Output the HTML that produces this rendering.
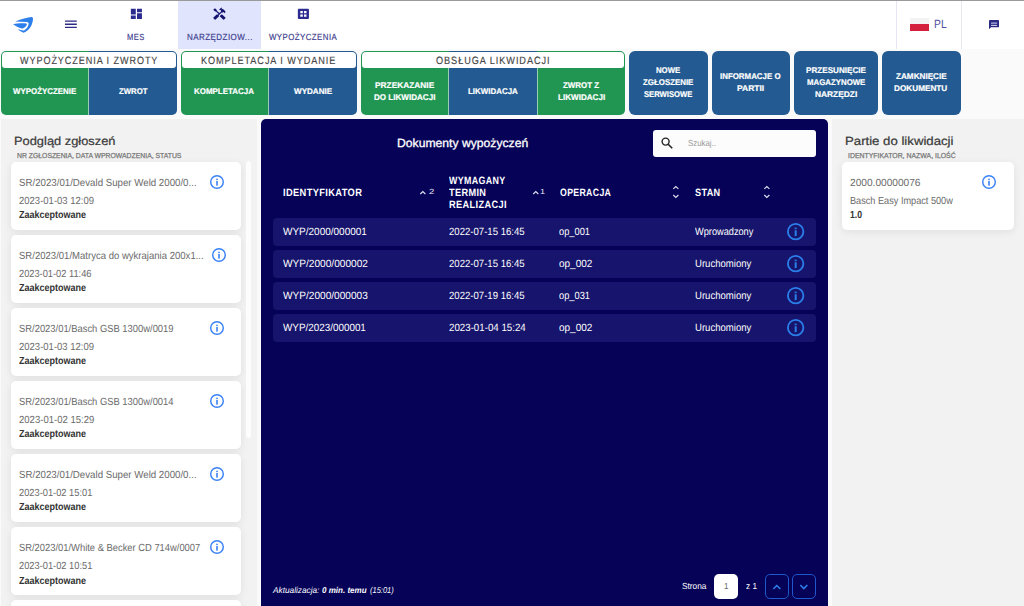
<!DOCTYPE html>
<html lang="pl">
<head>
<meta charset="utf-8">
<title>Narzędziownia – Wypożyczenia</title>
<style>
*{box-sizing:border-box;margin:0;padding:0}
html,body{width:1024px;height:606px;overflow:hidden;background:#fafafa;font-family:"Liberation Sans",sans-serif;color:#333;text-rendering:geometricPrecision}
body{position:relative}
.t{position:absolute;white-space:pre;transform-origin:0 50%;display:block}
.abs{position:absolute}
#topbar{position:absolute;left:0;top:0;width:1024px;height:49px;background:#fff;border-top:1px solid #999}
.tab{position:absolute;top:0;height:48px;width:83px;color:#3b3b8c}
.tab.active{background:#e0e4fd}
.tab svg{position:absolute;fill:#2c2c90}
.tab.active svg{fill:#14146f}
#lang{position:absolute;left:895.5px;top:0;width:66.5px;height:48px;border-left:1px solid #e6e6f2;border-right:1px solid #e6e6f2}
#actions{position:absolute;left:0;top:50.5px;height:64.3px;width:1024px}
.grp{position:absolute;top:0;height:64.3px;border-radius:5px;overflow:hidden}
.grp .lbl{position:absolute;left:1px;right:1px;top:1px;height:16.3px;background:#fff;border-radius:4px 4px 3px 3px;color:#444}
.btn{position:absolute;top:0;height:64.3px;color:#fff}
.grp .btn{width:88px}
.g{background:#219653}
.b{background:#225a91}
.sep{position:absolute;top:17px;bottom:0;width:1px;background:rgba(255,255,255,.55)}
.solo{border-radius:6px}
.panel{position:absolute;top:118.7px;height:488px;background:#f2f2f2}
.card{position:absolute;background:#fff;border-radius:5px;box-shadow:0 2px 8px rgba(0,0,0,.08)}
.info{position:absolute;overflow:visible}
#center{position:absolute;left:261px;top:118.7px;width:567px;height:488px;background:#050258;border-radius:5px 5px 0 0;color:#fff}
#search{position:absolute;left:392.4px;top:11px;width:162.4px;height:27.7px;background:#fcfcfc;border-radius:3px}
.row{position:absolute;left:12.2px;width:542.7px;height:28.2px;background:#16146c;border-radius:4px}
.pgbox{position:absolute;top:455.8px;height:24.3px;border-radius:5px}
</style>
</head>
<body>
<header id="topbar">
<svg class="abs" style="left:8px;top:11px" width="32" height="24" viewBox="8 12 32 24" fill="#2d7fea"><path d="M15.3 21.4C20 19.3 26 17.6 31.3 17C32.6 16.9 33.1 17.6 33 19C32.6 25 29.5 30.5 23.6 32.8C21.5 32.2 19.3 30.8 17.9 29.1C20 30.2 22.4 30.7 24 30.5C27 28.5 28.6 25.8 28.7 23.4C28.4 22.5 27.8 22.1 27 22C23 21.6 19 21.5 15.3 21.4Z"/><path d="M13.1 24.3C17 23.3 22 23 26.3 23.5C26.9 23.7 27 24.2 26.8 24.8C26 27 24 28.3 21.8 28.6C18.5 27.6 15.5 26 13.1 24.3Z"/></svg>
<svg class="abs" style="left:65px;top:19px" width="11.8" height="9" viewBox="0 0 12 9"><path d="M0 .4h12v1.3H0zM0 3.6h12v1.3H0zM0 6.8h12v1.3H0z" fill="#2b2b85"/></svg>
<nav>
<div class="tab" style="left:95px"><svg style="left:34.25px;top:6px" width="14.8" height="13.8" viewBox="0 0 24 24" preserveAspectRatio="none"><path d="M3 13h8V3H3v10zm0 8h8v-6H3v6zm10 0h8V11h-8v10zm0-18v6h8V3h-8z"/></svg><span class="t" style="left:32.4px;top:32.02px;font-size:8.9px;line-height:8.9px;letter-spacing:0.5px;transform:scaleX(0.852);-webkit-text-stroke:.15px #3b3b8c;">MES</span></div>
<div class="tab active" style="left:178.2px"><svg style="left:34.25px;top:6px" width="14.8" height="13.8" viewBox="0 0 24 24" preserveAspectRatio="none"><path d="M21.67 18.17l-5.3-5.3h-.99l-2.54 2.54v.99l5.3 5.3c.39.39 1.02.39 1.41 0l2.12-2.12c.39-.38.39-1.02 0-1.41zM17.34 10.19l1.41-1.41 2.12 2.12c1.17-1.17 1.17-3.07 0-4.24l-3.54-3.54-1.41 1.41V1.71l-.7-.71-3.54 3.54.71.71h2.83l-1.41 1.41 1.06 1.06-2.89 2.89-4.13-4.13V5.06L4.83 2.04 2 4.87l3.03 3.03h1.41l4.13 4.13-.85.85H7.6l-5.3 5.3c-.39.39-.39 1.02 0 1.41l2.12 2.12c.39.39 1.02.39 1.41 0l5.3-5.3v-2.12l5.15-5.15 1.06 1.05z"/></svg><span class="t" style="left:8.77px;top:32.02px;font-size:8.9px;line-height:8.9px;letter-spacing:0.5px;transform:scaleX(0.901);-webkit-text-stroke:.15px #3b3b8c;">NARZĘDZIOW...</span></div>
<div class="tab" style="left:261.3px"><svg style="left:34.25px;top:6px" width="14.8" height="13.8" viewBox="0 0 24 24" preserveAspectRatio="none"><path d="M19 3H5c-1.1 0-2 .9-2 2v14c0 1.1.9 2 2 2h14c1.1 0 2-.9 2-2V5c0-1.1-.9-2-2-2zm-8 14H7v-4h4v4zm0-6H7V7h4v4zm6 6h-4v-4h4v4zm0-6h-4V7h4v4z"/></svg><span class="t" style="left:7.72px;top:32.02px;font-size:8.9px;line-height:8.9px;letter-spacing:0.5px;transform:scaleX(0.886);-webkit-text-stroke:.15px #3b3b8c;">WYPOŻYCZENIA</span></div>
</nav>
<div id="lang"><div class="abs" style="left:13.5px;top:17px;width:19.2px;height:13px;background:linear-gradient(#f3f3f3 50%,#d4213d 50%)"></div><span class="t" style="left:37.19px;top:17.02px;font-size:12px;line-height:12px;color:#5252a2;transform:scaleX(0.860);">PL</span></div>
<svg class="abs" style="left:989px;top:19px" width="10.1" height="9.2" viewBox="0 0 11 10" preserveAspectRatio="none"><path d="M1 0h9a1 1 0 0 1 1 1v6a1 1 0 0 1-1 1H2.2L0 10V1a1 1 0 0 1 1-1z" fill="#2b2b85"/><path d="M2.2 2.5h6.6v2H2.2z" fill="#8f8fc6"/><path d="M2.2 5.4h6.6v.9H2.2z" fill="#f4f4fb"/></svg>
</header>
<section id="actions">
<div class="grp" style="left:1px;width:176px">
<div class="btn g" style="left:0px"><span class="t" style="left:11.87px;top:36.52px;font-size:8.4px;line-height:8.4px;font-weight:700;transform:scaleX(0.944);-webkit-text-stroke:.2px #fff;">WYPOŻYCZENIE</span></div>
<div class="btn b" style="left:88px"><span class="t" style="left:29.52px;top:36.52px;font-size:8.4px;line-height:8.4px;font-weight:700;transform:scaleX(0.926);-webkit-text-stroke:.2px #fff;">ZWROT</span></div>
<i class="sep" style="left:87px"></i>
<div class="lbl"><span class="t" style="left:17.93px;top:4.52px;font-size:10.6px;line-height:10.6px;letter-spacing:1.1px;color:#444;transform:scaleX(0.854);-webkit-text-stroke:.15px #444;">WYPOŻYCZENIA I ZWROTY</span></div>
</div>
<div class="grp" style="left:181px;width:176px">
<div class="btn g" style="left:0px"><span class="t" style="left:13.48px;top:36.52px;font-size:8.4px;line-height:8.4px;font-weight:700;transform:scaleX(0.949);-webkit-text-stroke:.2px #fff;">KOMPLETACJA</span></div>
<div class="btn b" style="left:88px"><span class="t" style="left:24.67px;top:36.52px;font-size:8.4px;line-height:8.4px;font-weight:700;transform:scaleX(0.966);-webkit-text-stroke:.2px #fff;">WYDANIE</span></div>
<i class="sep" style="left:87px"></i>
<div class="lbl"><span class="t" style="left:19.24px;top:4.52px;font-size:10.6px;line-height:10.6px;letter-spacing:1.1px;color:#444;transform:scaleX(0.858);-webkit-text-stroke:.15px #444;">KOMPLETACJA I WYDANIE</span></div>
</div>
<div class="grp" style="left:361px;width:264px">
<div class="btn g" style="left:0px"><span class="t" style="left:13.95px;top:30.52px;font-size:8.4px;line-height:8.4px;font-weight:700;transform:scaleX(0.994);-webkit-text-stroke:.2px #fff;">PRZEKAZANIE</span><span class="t" style="left:13.22px;top:42.52px;font-size:8.4px;line-height:8.4px;font-weight:700;transform:scaleX(0.963);-webkit-text-stroke:.2px #fff;">DO LIKWIDACJI</span></div>
<div class="btn b" style="left:88px"><span class="t" style="left:18.98px;top:36.52px;font-size:8.4px;line-height:8.4px;font-weight:700;transform:scaleX(0.947);-webkit-text-stroke:.2px #fff;">LIKWIDACJA</span></div>
<div class="btn g" style="left:176px"><span class="t" style="left:26.01px;top:30.52px;font-size:8.4px;line-height:8.4px;font-weight:700;transform:scaleX(0.948);-webkit-text-stroke:.2px #fff;">ZWROT Z</span><span class="t" style="left:20.72px;top:42.52px;font-size:8.4px;line-height:8.4px;font-weight:700;transform:scaleX(0.966);-webkit-text-stroke:.2px #fff;">LIKWIDACJI</span></div>
<i class="sep" style="left:87px"></i>
<i class="sep" style="left:176px"></i>
<div class="lbl"><span class="t" style="left:74.24px;top:4.52px;font-size:10.6px;line-height:10.6px;letter-spacing:1.1px;color:#444;transform:scaleX(0.862);-webkit-text-stroke:.15px #444;">OBSŁUGA LIKWIDACJI</span></div>
</div>
<div class="btn b solo" style="left:629.2px;width:78.6px"><span class="t" style="left:26.78px;top:15.52px;font-size:8.4px;line-height:8.4px;font-weight:700;transform:scaleX(0.928);-webkit-text-stroke:.2px #fff;">NOWE</span><span class="t" style="left:13.81px;top:27.52px;font-size:8.4px;line-height:8.4px;font-weight:700;transform:scaleX(0.941);-webkit-text-stroke:.2px #fff;">ZGŁOSZENIE</span><span class="t" style="left:14.79px;top:39.52px;font-size:8.4px;line-height:8.4px;font-weight:700;transform:scaleX(0.912);-webkit-text-stroke:.2px #fff;">SERWISOWE</span></div>
<div class="btn b solo" style="left:712px;width:78px"><span class="t" style="left:8.23px;top:21.52px;font-size:8.4px;line-height:8.4px;font-weight:700;transform:scaleX(0.943);-webkit-text-stroke:.2px #fff;">INFORMACJE O</span><span class="t" style="left:25.19px;top:33.52px;font-size:8.4px;line-height:8.4px;font-weight:700;transform:scaleX(1.015);-webkit-text-stroke:.2px #fff;">PARTII</span></div>
<div class="btn b solo" style="left:794px;width:83.5px"><span class="t" style="left:11.72px;top:15.52px;font-size:8.4px;line-height:8.4px;font-weight:700;transform:scaleX(0.969);-webkit-text-stroke:.2px #fff;">PRZESUNIĘCIE</span><span class="t" style="left:12.73px;top:27.52px;font-size:8.4px;line-height:8.4px;font-weight:700;transform:scaleX(0.936);-webkit-text-stroke:.2px #fff;">MAGAZYNOWE</span><span class="t" style="left:20.94px;top:39.52px;font-size:8.4px;line-height:8.4px;font-weight:700;-webkit-text-stroke:.2px #fff;">NARZĘDZI</span></div>
<div class="btn b solo" style="left:882.1px;width:78.5px"><span class="t" style="left:13.66px;top:21.52px;font-size:8.4px;line-height:8.4px;font-weight:700;transform:scaleX(0.973);-webkit-text-stroke:.2px #fff;">ZAMKNIĘCIE</span><span class="t" style="left:12.36px;top:33.52px;font-size:8.4px;line-height:8.4px;font-weight:700;transform:scaleX(0.979);-webkit-text-stroke:.2px #fff;">DOKUMENTU</span></div>
</section>
<aside class="panel" id="left" style="left:0.7px;width:256.2px">
<h2 class="t" style="left:13.17px;top:17.32px;font-size:11.9px;line-height:11.9px;color:#3a3a3a;transform:scaleX(1.081);font-weight:400;-webkit-text-stroke:.22px #3a3a3a;">Podgląd zgłoszeń</h2>
<h3 class="t" style="left:16.53px;top:33.32px;font-size:7.2px;line-height:7.2px;color:#777;transform:scaleX(0.951);font-weight:400;-webkit-text-stroke:.25px #777;">NR ZGŁOSZENIA, DATA WPROWADZENIA, STATUS</h3>
<article class="card" style="left:10.1px;top:42.9px;width:230.7px;height:68.4px"><span class="t" style="left:8.28px;top:17.42px;font-size:10.3px;line-height:10.3px;color:#6a6a6a;transform:scaleX(0.941);">SR/2023/01/Devald Super Weld 2000/0...</span><span class="t" style="left:8.41px;top:35.42px;font-size:10.3px;line-height:10.3px;color:#6a6a6a;transform:scaleX(0.923);">2023-01-03 12:09</span><span class="t" style="left:8.65px;top:49.42px;font-size:10.3px;line-height:10.3px;font-weight:700;color:#333;transform:scaleX(0.874);">Zaakceptowane</span><svg class="info" style="left:199.4px;top:13.6px" width="14" height="14" viewBox="0 0 14 14"><circle cx="7" cy="7" r="6.28" fill="none" stroke="#3b82f6" stroke-width="1.45"/><rect x="6.2" y="5.88" width="1.61" height="4.76" fill="#3b82f6"/><rect x="6.2" y="3.71" width="1.61" height="1.33" fill="#3b82f6"/></svg></article>
<article class="card" style="left:10.1px;top:115.95px;width:230.7px;height:68.4px"><span class="t" style="left:8.29px;top:17.37px;font-size:10.3px;line-height:10.3px;color:#6a6a6a;transform:scaleX(0.927);">SR/2023/01/Matryca do wykrajania 200x1...</span><span class="t" style="left:8.42px;top:35.37px;font-size:10.3px;line-height:10.3px;color:#6a6a6a;transform:scaleX(0.900);">2023-01-02 11:46</span><span class="t" style="left:8.65px;top:49.37px;font-size:10.3px;line-height:10.3px;font-weight:700;color:#333;transform:scaleX(0.874);">Zaakceptowane</span><svg class="info" style="left:201.4px;top:13.6px" width="14" height="14" viewBox="0 0 14 14"><circle cx="7" cy="7" r="6.28" fill="none" stroke="#3b82f6" stroke-width="1.45"/><rect x="6.2" y="5.88" width="1.61" height="4.76" fill="#3b82f6"/><rect x="6.2" y="3.71" width="1.61" height="1.33" fill="#3b82f6"/></svg></article>
<article class="card" style="left:10.1px;top:189px;width:230.7px;height:68.4px"><span class="t" style="left:8.3px;top:17.32px;font-size:10.3px;line-height:10.3px;color:#6a6a6a;transform:scaleX(0.912);">SR/2023/01/Basch GSB 1300w/0019</span><span class="t" style="left:8.41px;top:35.32px;font-size:10.3px;line-height:10.3px;color:#6a6a6a;transform:scaleX(0.923);">2023-01-03 12:09</span><span class="t" style="left:8.65px;top:49.32px;font-size:10.3px;line-height:10.3px;font-weight:700;color:#333;transform:scaleX(0.874);">Zaakceptowane</span><svg class="info" style="left:199.4px;top:13.6px" width="14" height="14" viewBox="0 0 14 14"><circle cx="7" cy="7" r="6.28" fill="none" stroke="#3b82f6" stroke-width="1.45"/><rect x="6.2" y="5.88" width="1.61" height="4.76" fill="#3b82f6"/><rect x="6.2" y="3.71" width="1.61" height="1.33" fill="#3b82f6"/></svg></article>
<article class="card" style="left:10.1px;top:262.05px;width:230.7px;height:68.4px"><span class="t" style="left:8.3px;top:17.27px;font-size:10.3px;line-height:10.3px;color:#6a6a6a;transform:scaleX(0.912);">SR/2023/01/Basch GSB 1300w/0014</span><span class="t" style="left:8.41px;top:35.27px;font-size:10.3px;line-height:10.3px;color:#6a6a6a;transform:scaleX(0.926);">2023-01-02 15:29</span><span class="t" style="left:8.65px;top:49.27px;font-size:10.3px;line-height:10.3px;font-weight:700;color:#333;transform:scaleX(0.874);">Zaakceptowane</span><svg class="info" style="left:199.4px;top:13.6px" width="14" height="14" viewBox="0 0 14 14"><circle cx="7" cy="7" r="6.28" fill="none" stroke="#3b82f6" stroke-width="1.45"/><rect x="6.2" y="5.88" width="1.61" height="4.76" fill="#3b82f6"/><rect x="6.2" y="3.71" width="1.61" height="1.33" fill="#3b82f6"/></svg></article>
<article class="card" style="left:10.1px;top:335.1px;width:230.7px;height:68.4px"><span class="t" style="left:8.28px;top:17.22px;font-size:10.3px;line-height:10.3px;color:#6a6a6a;transform:scaleX(0.941);">SR/2023/01/Devald Super Weld 2000/0...</span><span class="t" style="left:8.42px;top:35.22px;font-size:10.3px;line-height:10.3px;color:#6a6a6a;transform:scaleX(0.902);">2023-01-02 15:01</span><span class="t" style="left:8.65px;top:49.22px;font-size:10.3px;line-height:10.3px;font-weight:700;color:#333;transform:scaleX(0.874);">Zaakceptowane</span><svg class="info" style="left:199.4px;top:13.6px" width="14" height="14" viewBox="0 0 14 14"><circle cx="7" cy="7" r="6.28" fill="none" stroke="#3b82f6" stroke-width="1.45"/><rect x="6.2" y="5.88" width="1.61" height="4.76" fill="#3b82f6"/><rect x="6.2" y="3.71" width="1.61" height="1.33" fill="#3b82f6"/></svg></article>
<article class="card" style="left:10.1px;top:408.15px;width:230.7px;height:68.4px"><span class="t" style="left:8.3px;top:17.17px;font-size:10.3px;line-height:10.3px;color:#6a6a6a;transform:scaleX(0.910);">SR/2023/01/White &amp; Becker CD 714w/0007</span><span class="t" style="left:8.42px;top:35.17px;font-size:10.3px;line-height:10.3px;color:#6a6a6a;transform:scaleX(0.902);">2023-01-02 10:51</span><span class="t" style="left:8.65px;top:50.17px;font-size:10.3px;line-height:10.3px;font-weight:700;color:#333;transform:scaleX(0.874);">Zaakceptowane</span><svg class="info" style="left:199.4px;top:13.6px" width="14" height="14" viewBox="0 0 14 14"><circle cx="7" cy="7" r="6.28" fill="none" stroke="#3b82f6" stroke-width="1.45"/><rect x="6.2" y="5.88" width="1.61" height="4.76" fill="#3b82f6"/><rect x="6.2" y="3.71" width="1.61" height="1.33" fill="#3b82f6"/></svg></article>
<article class="card" style="left:10.1px;top:481.2px;width:230.7px;height:68.4px"></article>
<div class="abs" style="left:244.9px;top:42.6px;width:5.3px;height:276.8px;background:#fdfdfd;border-radius:3px"></div>
</aside>
<main id="center">
<h1 class="t" style="left:136.26px;top:19.32px;font-size:11.9px;line-height:11.9px;transform:scaleX(1.023);font-weight:400;-webkit-text-stroke:.3px #fff;">Dokumenty wypożyczeń</h1>
<div id="search"><svg class="abs" style="left:7.500px;top:7.300px" width="12" height="12" viewBox="0 0 12 12"><circle cx="4.6" cy="4.6" r="3.5" fill="none" stroke="#222" stroke-width="1.4"/><path d="M7.2 7.2L11.2 11.2" stroke="#222" stroke-width="1.6"/></svg><span class="t" style="left:34.76px;top:9.32px;font-size:8.8px;line-height:8.8px;color:#9a9a9a;transform:scaleX(0.894);">Szukaj..</span></div>
<div class="thead">
<span class="t" style="left:21.7px;top:69.32px;font-size:10.6px;line-height:10.6px;font-weight:700;letter-spacing:0.4px;transform:scaleX(0.879);">IDENTYFIKATOR</span>
<svg class="abs" style="left:159.3px;top:72.1px;overflow:visible" width="5.7" height="3" viewBox="0 0 5.7 3"><path d="M0.3 3 L2.85 0.5 L5.4 3" fill="none" stroke="#e4e4f0" stroke-width="1.1"/></svg><span class="t" style="left:168.43px;top:69.32px;font-size:7.4px;line-height:7.4px;color:#e8e8f0;transform:scaleX(1.291);">2</span>
<span class="t" style="left:188.23px;top:57.32px;font-size:10.6px;line-height:10.6px;font-weight:700;letter-spacing:0.4px;transform:scaleX(0.838);">WYMAGANY</span>
<span class="t" style="left:188.28px;top:69.32px;font-size:10.6px;line-height:10.6px;font-weight:700;letter-spacing:0.4px;transform:scaleX(0.867);">TERMIN</span>
<span class="t" style="left:187.81px;top:81.32px;font-size:10.6px;line-height:10.6px;font-weight:700;letter-spacing:0.4px;transform:scaleX(0.872);">REALIZACJI</span>
<svg class="abs" style="left:271.9px;top:72.1px;overflow:visible" width="5.6" height="3" viewBox="0 0 5.6 3"><path d="M0.3 3 L2.8 0.5 L5.3 3" fill="none" stroke="#e4e4f0" stroke-width="1.1"/></svg><span class="t" style="left:279.39px;top:69.32px;font-size:7.4px;line-height:7.4px;color:#e8e8f0;transform:scaleX(1.221);">1</span>
<span class="t" style="left:298.53px;top:69.32px;font-size:10.6px;line-height:10.6px;font-weight:700;letter-spacing:0.4px;transform:scaleX(0.826);">OPERACJA</span>
<svg class="abs" style="left:412px;top:67.3px;overflow:visible" width="5.7" height="2.9" viewBox="0 0 5.7 2.9"><path d="M0.3 2.9 L2.85 0.5 L5.4 2.9" fill="none" stroke="#e4e4f0" stroke-width="1.1"/></svg><svg class="abs" style="left:412px;top:76.7px;overflow:visible" width="5.7" height="3" viewBox="0 0 5.7 3"><path d="M0.3 0 L2.85 2.5 L5.4 0" fill="none" stroke="#e4e4f0" stroke-width="1.1"/></svg>
<span class="t" style="left:434.19px;top:69.32px;font-size:10.6px;line-height:10.6px;font-weight:700;letter-spacing:0.4px;transform:scaleX(0.861);">STAN</span>
<svg class="abs" style="left:502.6px;top:67.3px;overflow:visible" width="5.7" height="2.9" viewBox="0 0 5.7 2.9"><path d="M0.3 2.9 L2.85 0.5 L5.4 2.9" fill="none" stroke="#e4e4f0" stroke-width="1.1"/></svg><svg class="abs" style="left:502.6px;top:76.7px;overflow:visible" width="5.7" height="3" viewBox="0 0 5.7 3"><path d="M0.3 0 L2.85 2.5 L5.4 0" fill="none" stroke="#e4e4f0" stroke-width="1.1"/></svg>
</div>
<div class="row" style="top:99.2px"><span class="t" style="left:9.8px;top:9.12px;font-size:10.5px;line-height:10.5px;transform:scaleX(0.952);">WYP/2000/000001</span><span class="t" style="left:175.72px;top:9.12px;font-size:10.5px;line-height:10.5px;transform:scaleX(0.912);">2022-07-15 16:45</span><span class="t" style="left:286.27px;top:9.12px;font-size:10.5px;line-height:10.5px;transform:scaleX(0.884);">op_001</span><span class="t" style="left:422.12px;top:9.12px;font-size:10.5px;line-height:10.5px;transform:scaleX(0.877);">Wprowadzony</span><svg class="info" style="left:513.85px;top:5.45px" width="17.3" height="17.3" viewBox="0 0 17.3 17.3"><circle cx="8.65" cy="8.65" r="7.75" fill="none" stroke="#2b7fea" stroke-width="1.8"/><rect x="7.66" y="7.27" width="1.99" height="5.88" fill="#2b7fea"/><rect x="7.66" y="4.58" width="1.99" height="1.64" fill="#2b7fea"/></svg></div>
<div class="row" style="top:131.25px"><span class="t" style="left:9.8px;top:9.07px;font-size:10.5px;line-height:10.5px;transform:scaleX(0.963);">WYP/2000/000002</span><span class="t" style="left:175.72px;top:9.07px;font-size:10.5px;line-height:10.5px;transform:scaleX(0.912);">2022-07-15 16:45</span><span class="t" style="left:286.24px;top:9.07px;font-size:10.5px;line-height:10.5px;transform:scaleX(0.952);">op_002</span><span class="t" style="left:421.35px;top:9.07px;font-size:10.5px;line-height:10.5px;transform:scaleX(0.910);">Uruchomiony</span><svg class="info" style="left:513.85px;top:5.45px" width="17.3" height="17.3" viewBox="0 0 17.3 17.3"><circle cx="8.65" cy="8.65" r="7.75" fill="none" stroke="#2b7fea" stroke-width="1.8"/><rect x="7.66" y="7.27" width="1.99" height="5.88" fill="#2b7fea"/><rect x="7.66" y="4.58" width="1.99" height="1.64" fill="#2b7fea"/></svg></div>
<div class="row" style="top:163.3px"><span class="t" style="left:9.8px;top:9.02px;font-size:10.5px;line-height:10.5px;transform:scaleX(0.962);">WYP/2000/000003</span><span class="t" style="left:175.72px;top:9.02px;font-size:10.5px;line-height:10.5px;transform:scaleX(0.912);">2022-07-19 16:45</span><span class="t" style="left:286.27px;top:9.02px;font-size:10.5px;line-height:10.5px;transform:scaleX(0.884);">op_031</span><span class="t" style="left:421.35px;top:9.02px;font-size:10.5px;line-height:10.5px;transform:scaleX(0.910);">Uruchomiony</span><svg class="info" style="left:513.85px;top:5.45px" width="17.3" height="17.3" viewBox="0 0 17.3 17.3"><circle cx="8.65" cy="8.65" r="7.75" fill="none" stroke="#2b7fea" stroke-width="1.8"/><rect x="7.66" y="7.27" width="1.99" height="5.88" fill="#2b7fea"/><rect x="7.66" y="4.58" width="1.99" height="1.64" fill="#2b7fea"/></svg></div>
<div class="row" style="top:195.35px"><span class="t" style="left:9.8px;top:8.97px;font-size:10.5px;line-height:10.5px;transform:scaleX(0.940);">WYP/2023/000001</span><span class="t" style="left:175.71px;top:8.97px;font-size:10.5px;line-height:10.5px;transform:scaleX(0.926);">2023-01-04 15:24</span><span class="t" style="left:286.24px;top:8.97px;font-size:10.5px;line-height:10.5px;transform:scaleX(0.952);">op_002</span><span class="t" style="left:421.35px;top:8.97px;font-size:10.5px;line-height:10.5px;transform:scaleX(0.910);">Uruchomiony</span><svg class="info" style="left:513.85px;top:5.45px" width="17.3" height="17.3" viewBox="0 0 17.3 17.3"><circle cx="8.65" cy="8.65" r="7.75" fill="none" stroke="#2b7fea" stroke-width="1.8"/><rect x="7.66" y="7.27" width="1.99" height="5.88" fill="#2b7fea"/><rect x="7.66" y="4.58" width="1.99" height="1.64" fill="#2b7fea"/></svg></div>
<footer>
<span class="t" style="left:12.18px;top:467.32px;font-size:8.5px;line-height:8.5px;font-style:italic;transform:scaleX(0.972);">Aktualizacja:</span>
<span class="t" style="left:61.31px;top:467.32px;font-size:8.5px;line-height:8.5px;font-weight:700;font-style:italic;transform:scaleX(0.943);">0 min. temu</span>
<span class="t" style="left:108.57px;top:467.32px;font-size:8.5px;line-height:8.5px;font-style:italic;transform:scaleX(0.883);">(15:01)</span>
<span class="t" style="left:421.13px;top:463.32px;font-size:8.8px;line-height:8.8px;transform:scaleX(0.941);">Strona</span>
<div class="pgbox" style="left:453.4px;width:24px;background:#fff"><span class="t" style="left:9.35px;top:7.52px;font-size:8.8px;line-height:8.8px;color:#666;transform:scaleX(0.911);">1</span></div>
<span class="t" style="left:485.18px;top:463.32px;font-size:8.8px;line-height:8.8px;transform:scaleX(0.933);">z 1</span>
<div class="pgbox" style="left:504.3px;width:24px;border:1px solid #1e58ca"><svg class="abs" style="left:7.2px;top:9.3px;overflow:visible" width="7.6" height="4.1" viewBox="0 0 7.6 4.1"><path d="M0.3 4.1 L3.8 0.5 L7.3 4.1" fill="none" stroke="#2f80ed" stroke-width="1.5"/></svg></div>
<div class="pgbox" style="left:531px;width:24px;border:1px solid #1e58ca"><svg class="abs" style="left:7.2px;top:9.3px;overflow:visible" width="7.6" height="4.1" viewBox="0 0 7.6 4.1"><path d="M0.3 0 L3.8 3.6 L7.3 0" fill="none" stroke="#2f80ed" stroke-width="1.5"/></svg></div>
</footer>
</main>
<aside class="panel" id="right" style="left:831.7px;width:193px">
<h2 class="t" style="left:13.74px;top:17.32px;font-size:11.9px;line-height:11.9px;color:#3a3a3a;transform:scaleX(1.109);font-weight:400;-webkit-text-stroke:.22px #3a3a3a;">Partie do likwidacji</h2>
<h3 class="t" style="left:16.57px;top:33.32px;font-size:7.2px;line-height:7.2px;color:#777;transform:scaleX(0.961);font-weight:400;-webkit-text-stroke:.25px #777;">IDENTYFIKATOR, NAZWA, ILOŚĆ</h3>
<article class="card" style="left:10.6px;top:42.9px;width:171.4px;height:68.4px"><span class="t" style="left:7.98px;top:17.42px;font-size:10.3px;line-height:10.3px;color:#6a6a6a;transform:scaleX(0.985);">2000.00000076</span><span class="t" style="left:7.6px;top:35.42px;font-size:10.3px;line-height:10.3px;color:#6a6a6a;transform:scaleX(0.889);">Basch Easy Impact 500w</span><span class="t" style="left:7.97px;top:49.42px;font-size:10.3px;line-height:10.3px;font-weight:700;color:#333;transform:scaleX(0.845);">1.0</span><svg class="info" style="left:139.9px;top:13.6px" width="14" height="14" viewBox="0 0 14 14"><circle cx="7" cy="7" r="6.28" fill="none" stroke="#3b82f6" stroke-width="1.45"/><rect x="6.2" y="5.88" width="1.61" height="4.76" fill="#3b82f6"/><rect x="6.2" y="3.71" width="1.61" height="1.33" fill="#3b82f6"/></svg></article>
</aside>
</body>
</html>
